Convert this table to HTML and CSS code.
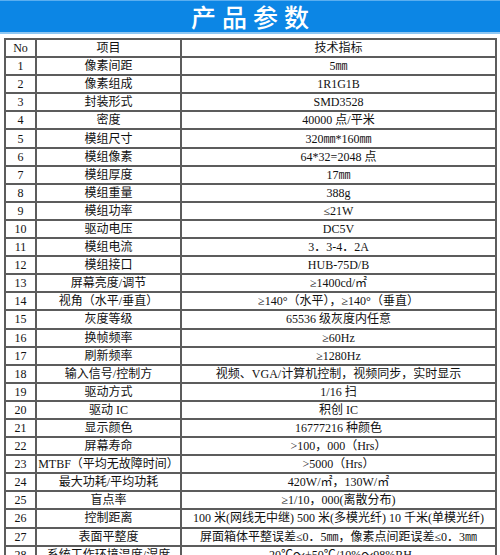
FILE: index.html
```html
<!DOCTYPE html>
<html lang="zh-CN">
<head>
<meta charset="utf-8">
<title>产品参数</title>
<link rel="stylesheet" href="styles.css">
</head>
<body>
<header class="banner"><h1 class="banner-title">产品参数</h1></header>
<main class="sheet">
<table class="spec">
<colgroup><col class="c-no"><col class="c-item"><col class="c-val"></colgroup>
<thead>
<tr><th>No</th><th>项目</th><th>技术指标</th></tr>
</thead>
<tbody>
<tr><td>1</td><td>像素间距</td><td>5㎜</td></tr>
<tr><td>2</td><td>像素组成</td><td>1R1G1B</td></tr>
<tr><td>3</td><td>封装形式</td><td>SMD3528</td></tr>
<tr><td>4</td><td>密度</td><td>40000 点/平米</td></tr>
<tr><td>5</td><td>模组尺寸</td><td>320㎜*160㎜</td></tr>
<tr><td>6</td><td>模组像素</td><td>64*32=2048 点</td></tr>
<tr><td>7</td><td>模组厚度</td><td>17㎜</td></tr>
<tr><td>8</td><td>模组重量</td><td>388g</td></tr>
<tr><td>9</td><td>模组功率</td><td>≤21W</td></tr>
<tr><td>10</td><td>驱动电压</td><td>DC5V</td></tr>
<tr><td>11</td><td>模组电流</td><td>3．3-4．2A</td></tr>
<tr><td>12</td><td>模组接口</td><td>HUB-75D/B</td></tr>
<tr><td>13</td><td>屏幕亮度/调节</td><td>≥1400cd/㎡</td></tr>
<tr><td>14</td><td>视角（水平/垂直）</td><td>≥140°（水平），≥140°（垂直）</td></tr>
<tr><td>15</td><td>灰度等级</td><td>65536 级灰度内任意</td></tr>
<tr><td>16</td><td>换帧频率</td><td>≥60Hz</td></tr>
<tr><td>17</td><td>刷新频率</td><td>≥1280Hz</td></tr>
<tr><td>18</td><td>输入信号/控制方</td><td>视频、VGA/计算机控制，视频同步，实时显示</td></tr>
<tr><td>19</td><td>驱动方式</td><td>1/16 扫</td></tr>
<tr><td>20</td><td>驱动 IC</td><td>积创 IC</td></tr>
<tr><td>21</td><td>显示颜色</td><td>16777216 种颜色</td></tr>
<tr><td>22</td><td>屏幕寿命</td><td>&gt;100，000（Hrs）</td></tr>
<tr><td>23</td><td>MTBF（平均无故障时间）</td><td>&gt;5000（Hrs）</td></tr>
<tr><td>24</td><td>最大功耗/平均功耗</td><td>420W/㎡，130W/㎡</td></tr>
<tr><td>25</td><td>盲点率</td><td>≥1/10，000(离散分布)</td></tr>
<tr><td>26</td><td>控制距离</td><td>100 米(网线无中继) 500 米(多模光纤) 10 千米(单模光纤)</td></tr>
<tr><td>27</td><td>表面平整度</td><td>屏面箱体平整误差≤0．5㎜，像素点间距误差≤0．3㎜</td></tr>
<tr><td>28</td><td>系统工作环境温度/湿度</td><td>-20℃～+50℃/10%～98%RH</td></tr>
</tbody>
</table>
</main>
</body>
</html>
```

FILE: styles.css
```css
html, body {
  margin: 0;
  padding: 0;
  background: #ffffff;
}
body {
  width: 500px;
  height: 555px;
  overflow: hidden;
  font-family: "Liberation Serif", "Noto Sans CJK SC", serif;
  color: #111111;
}
.banner {
  height: 34px;
  background: #0c86e5;
  border-top: 1px solid #5aaef0;
  box-sizing: border-box;
  border-bottom: 2px solid #8ec7f3;
  display: flex;
  align-items: center;
  justify-content: center;
}
.banner-title {
  margin: 0 -6px 0 0;
  font-family: "Noto Sans CJK SC", sans-serif;
  font-weight: 500;
  font-size: 25px;
  line-height: 31px;
  letter-spacing: 6px;
  color: #ffffff;
}
.sheet {
  padding: 4px 5px 0 4px;
}
.spec {
  width: 491px;
  border-collapse: collapse;
  table-layout: fixed;
  font-size: 12px;
}
.c-no { width: 31px; }
.c-item { width: 145px; }
.c-val { width: 315px; }
.spec th,
.spec td {
  border: 2px solid #5c5c5c;
  height: 16.1px;
  padding: 0;
  text-align: center;
  vertical-align: middle;
  font-weight: normal;
  line-height: 14px;
  white-space: nowrap;
  overflow: hidden;
}
```
